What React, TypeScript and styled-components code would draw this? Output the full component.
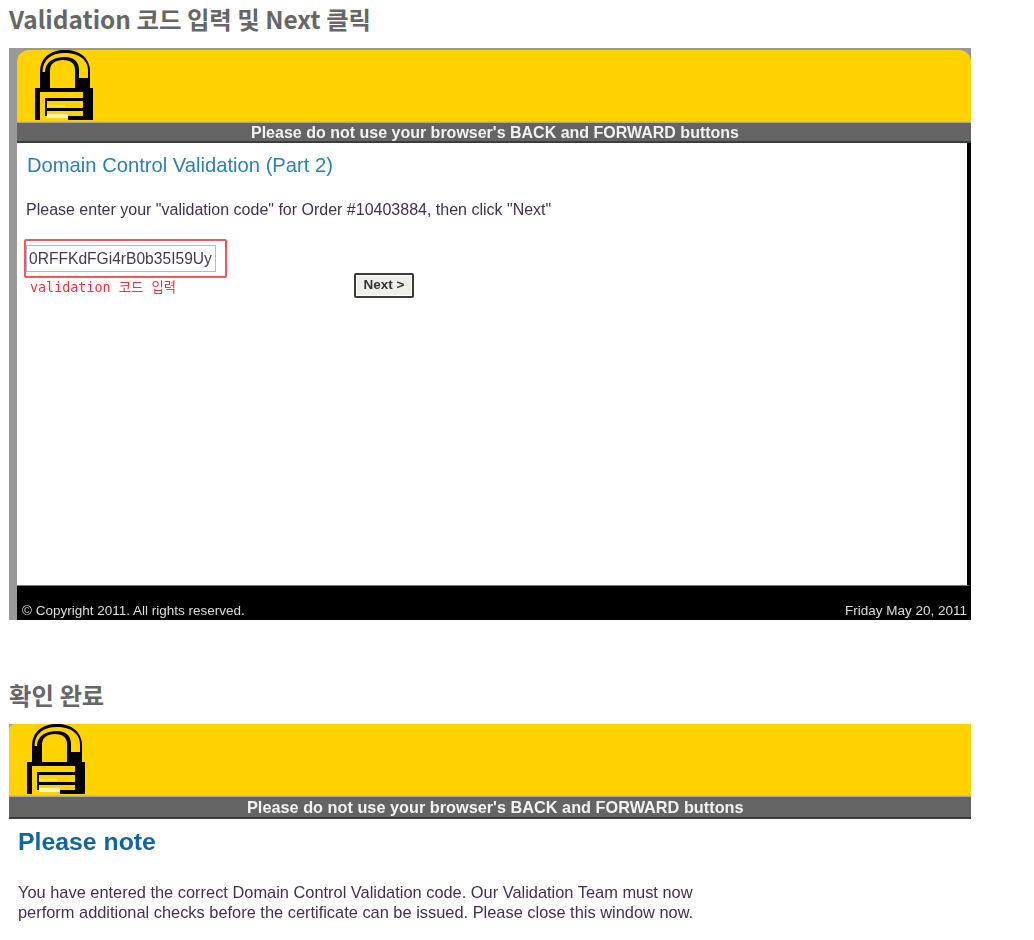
import React from "react";
import styled, { createGlobalStyle } from "styled-components";

const Global = createGlobalStyle`
  html, body { margin: 0; padding: 0; background: #fff; }
  body { font-family: "Liberation Sans", Arial, sans-serif; }
`;

const Page = styled.main`
  width: 962px;
  padding: 0 0 0 9px;
  height: 940px;
  overflow: hidden;
`;

const Heading = styled.h3<{ $top: number }>`
  margin: ${(p) => p.$top}px 0 0;
  height: 34px;
  font: 700 24.4px/34px "Noto Sans CJK KR", "Noto Sans", sans-serif;
  color: #666;
  white-space: nowrap;
`;

const Shot = styled.section<{ $framed?: boolean; $mt: number }>`
  margin-top: ${(p) => p.$mt}px;
  width: 962px;
  display: flex;
  flex-direction: column;
  filter: blur(0.4px);
  background: #999;
  padding: ${(p) => (p.$framed ? "2px 0 0 8px" : "0")};
  box-sizing: border-box;
`;

const Banner = styled.div<{ $h: number; $pl: number; $framed?: boolean }>`
  height: ${(p) => p.$h}px;
  background: #ffd200;
  border-radius: ${(p) => (p.$framed ? "12px 12px 0 0" : "6px 0 0 0")};
  padding: 0 0 1px ${(p) => p.$pl}px;
  display: flex;
  align-items: flex-end;
  box-sizing: border-box;
  border-bottom: 1px solid #d8c04a;
`;

const Strip = styled.div<{ $h: number; $pl: number; $size: number }>`
  height: ${(p) => p.$h}px;
  background: #646464;
  border-top: 1px solid #aaa;
  border-bottom: 2px solid #3c3c3c;
  box-sizing: border-box;
  color: #f2f2f2;
  font-weight: 700;
  font-size: ${(p) => p.$size}px;
  line-height: 20px;
  white-space: nowrap;
  padding-left: ${(p) => p.$pl}px;
`;

const Body = styled.div`
  height: 443px;
  background: #fff;
  border-right: 4px solid #000;
  border-bottom: 1px solid #777;
  box-sizing: border-box;
  padding: 9px 0 0 9px;
`;

const Title = styled.h2`
  margin: 0 0 0 1px;
  font-weight: 400;
  font-size: 20.2px;
  line-height: 26px;
  color: #2d7fb0;
`;

const Prompt = styled.p`
  margin: 22px 0 0;
  font-size: 16px;
  line-height: 20px;
  color: #44304c;
  white-space: nowrap;
`;

const FormRow = styled.div`
  display: flex;
  align-items: flex-start;
  margin: 19px 0 0 -2px;
`;

const CodeField = styled.div`
  width: 203px;
`;

const Highlight = styled.div`
  width: 203px;
  height: 39px;
  border: 2px solid #f4555f;
  border-radius: 2px;
  box-sizing: border-box;
  padding: 4px 0 0 0;
`;

const CodeInput = styled.div`
  width: 190px;
  height: 27px;
  border: 1px solid #a9bdd0;
  box-sizing: border-box;
  color: #443a50;
  font-size: 15.6px;
  line-height: 25px;
  padding-left: 2px;
  white-space: nowrap;
  overflow: hidden;
`;

const RedNote = styled.div`
  margin: 1px 0 0 6px;
  color: #f0323c;
  font: 13.4px/18px "DejaVu Sans Mono", "Noto Sans CJK KR", monospace;
  white-space: nowrap;
`;

const NextButton = styled.div`
  margin: 34px 0 0 127px;
  width: 60px;
  height: 25px;
  box-sizing: border-box;
  background: #eeeeea;
  border: 2px solid #3a3a3a;
  box-shadow: inset 0 0 0 1px #fff;
  border-radius: 2px;
  color: #333;
  font-weight: 700;
  font-size: 13.5px;
  line-height: 20px;
  text-align: center;
`;

const Footer = styled.footer`
  height: 34px;
  background: #000;
  color: #ddd;
  font-size: 13.5px;
  display: flex;
  justify-content: space-between;
  align-items: flex-end;
  padding: 0 4px 0 5px;
  line-height: 18px;
`;

const NoteBody = styled.div`
  padding: 6px 0 0 9px;
  background: #fff;
`;

const NoteTitle = styled.h2`
  margin: 0;
  font-weight: 700;
  font-size: 24.8px;
  line-height: 34px;
  color: #14659e;
`;

const NoteText = styled.p`
  margin: 23px 0 0;
  font-size: 16.4px;
  line-height: 20px;
  color: #44304c;
  white-space: nowrap;
`;

const Y = "#ffd200";

const Lock = ({ w, h }: { w: number; h: number }) => (
  <svg width={w} height={h} viewBox="0 0 58 70" aria-hidden="true">
    <path d="M5 40V22C5 8 15 0 30 0s25 8 25 22v18z" fill="#000" />
    <path d="M15 40V20c0-6 5-10 13-10s12 4 12 10v20z" fill={Y} />
    <path d="M7.5 22C7.5 10 16 3 30 3c14 0 23 7 23 17v8H44v-8c0-8-5-13-14-13-11 0-20 5-20 15z" fill={Y} />
    <path d="M0 38h58v32H0z" fill="#000" />
    <path d="M5 42h43v28H5z" fill={Y} />
    <path d="M10 48h2v18h-2z" fill="#000" />
    <path d="M12 48h36v3H12zM12 58h36v3H12zM33 66h15v4H33z" fill="#000" />
    <path d="M12 55h18v1.5H12z" fill="#ffe878" />
    <path d="M12 64h21v4H12z" fill="#fff3b0" />
  </svg>
);

export default function App() {
  return (
    <Page>
      <Global />
      <Heading $top={2}>Validation 코드 입력 및 Next 클릭</Heading>
      <Shot $framed $mt={12}>
        <Banner $framed $h={72} $pl={18}>
          <Lock w={58} h={70} />
        </Banner>
        <Strip $h={21} $pl={234} $size={16}>Please do not use your browser's BACK and FORWARD buttons</Strip>
        <Body>
          <Title>Domain Control Validation (Part 2)</Title>
          <Prompt>Please enter your "validation code" for Order #10403884, then click "Next"</Prompt>
          <FormRow>
            <CodeField>
              <Highlight>
                <CodeInput>0RFFKdFGi4rB0b35I59Uy</CodeInput>
              </Highlight>
              <RedNote>validation 코드 입력</RedNote>
            </CodeField>
            <NextButton>Next &gt;</NextButton>
          </FormRow>
        </Body>
        <Footer>
          <span>© Copyright 2011. All rights reserved.</span>
          <span>Friday May 20, 2011</span>
        </Footer>
      </Shot>
      <Heading $top={58}>확인 완료</Heading>
      <Shot $mt={12}>
        <Banner $h={72} $pl={17}>
          <Lock w={60} h={70} />
        </Banner>
        <Strip $h={23} $pl={238} $size={16.3}>Please do not use your browser's BACK and FORWARD buttons</Strip>
        <NoteBody>
          <NoteTitle>Please note</NoteTitle>
          <NoteText>
            You have entered the correct Domain Control Validation code. Our Validation Team must now
            <br />
            perform additional checks before the certificate can be issued. Please close this window now.
          </NoteText>
        </NoteBody>
      </Shot>
    </Page>
  );
}
